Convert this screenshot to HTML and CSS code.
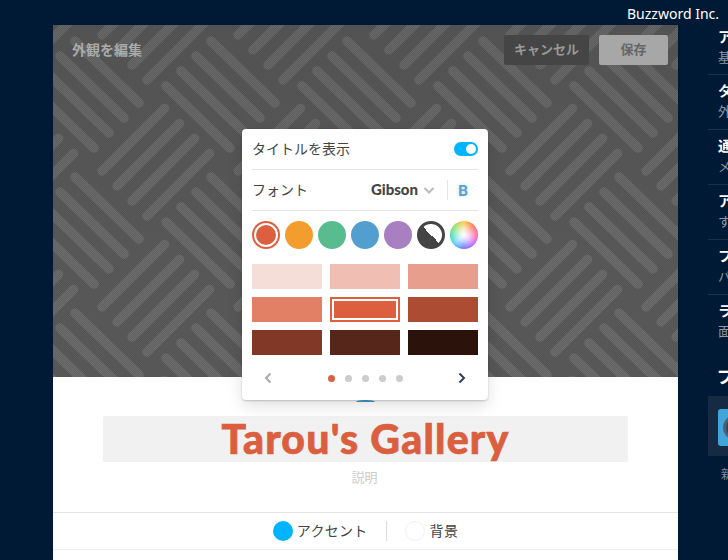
FILE: index.html
```html
<!DOCTYPE html>
<html lang="ja">
<head>
<meta charset="utf-8">
<title>外観を編集</title>
<link rel="stylesheet" href="styles.css">
</head>
<body>
<div class="app">
  <main class="editor">
    <section class="hero">
      <svg class="hero-art" width="625" height="352" viewBox="53 25 625 352" aria-hidden="true">
        <defs>
          <g id="fall" class="bars">
            <path d="M75 41l64 62M60 56l64 62M45 71l64 62M30 86l64 62"/>
          </g>
          <g id="rise" class="bars">
            <path d="M147 80l62.500-62.500M132 65l62.500-62.500M117 50l62.500-62.500M102 35l62.500-62.500"/>
          </g>
          <pattern id="weave" width="136" height="136" patternUnits="userSpaceOnUse">
            <use href="#fall"/>
            <use href="#fall" x="-136"/>
            <use href="#fall" y="-136"/>
            <use href="#fall" x="-136" y="-136"/>
            <use href="#rise"/>
            <use href="#rise" y="136"/>
            <use href="#rise" x="-136"/>
            <use href="#rise" x="-136" y="136"/>
          </pattern>
        </defs>
        <rect class="hero-base" x="53" y="25" width="625" height="352"/>
        <rect x="53" y="25" width="625" height="352" fill="url(#weave)"/>
      </svg>
      <div class="hero-bar">
        <h1 class="hero-title">外観を編集</h1>
        <div class="hero-actions">
          <button class="btn btn-cancel">キャンセル</button>
          <button class="btn btn-save">保存</button>
        </div>
      </div>
    </section>

    <section class="gallery-head">
      <div class="avatar"></div>
      <h2 class="gallery-title">Tarou's Gallery</h2>
      <p class="gallery-desc">説明</p>
    </section>

    <div class="tabs">
      <span class="tab"><i class="dot dot-accent"></i><span class="tab-label">アクセント</span></span>
      <span class="tab-rule"></span>
      <span class="tab tab-bg"><i class="dot dot-bg"></i><span class="tab-label">背景</span></span>
    </div>

    <div class="popover">
      <div class="pop-row pop-row-first">
        <span class="pop-label">タイトルを表示</span>
        <span class="toggle"><i class="knob"></i></span>
      </div>
      <div class="pop-row">
        <span class="pop-label">フォント</span>
        <span class="font-pick">
          <b class="font-name">Gibson</b>
          <svg class="chev-down" width="12" height="7" viewBox="0 0 12 7"><path d="M1.500 1l4.500 4.500L10.500 1"/></svg>
          <span class="font-rule"></span>
          <b class="font-bold">B</b>
        </span>
      </div>
      <div class="swatches">
        <span class="swatch swatch-on"><i></i></span>
        <span class="swatch s-orange"></span>
        <span class="swatch s-green"></span>
        <span class="swatch s-blue"></span>
        <span class="swatch s-purple"></span>
        <span class="swatch s-contrast"></span>
        <span class="swatch s-wheel"></span>
      </div>
      <div class="shades">
        <span class="shade c1"></span>
        <span class="shade c2"></span>
        <span class="shade c3"></span>
        <span class="shade c4"></span>
        <span class="shade c5 shade-on"></span>
        <span class="shade c6"></span>
        <span class="shade c7"></span>
        <span class="shade c8"></span>
        <span class="shade c9"></span>
      </div>
      <div class="pager">
        <svg class="pg pg-prev" width="8" height="12" viewBox="0 0 8 12"><path d="M6.500 1.500L2 6l4.500 4.500"/></svg>
        <span class="pager-dots"><i class="on"></i><i></i><i></i><i></i><i></i></span>
        <svg class="pg pg-next" width="8" height="12" viewBox="0 0 8 12"><path d="M1.500 1.500L6 6l-4.500 4.500"/></svg>
      </div>
    </div>
  </main>

  <aside class="side">
    <div class="brand">Buzzword Inc.</div>
    <ul class="side-list">
      <li><b>アカウント</b><span>基本設定</span></li>
      <li><b>タイトル</b><span>外観</span></li>
      <li><b>通知</b><span>メール</span></li>
      <li><b>アクセス</b><span>すべて</span></li>
      <li><b>フォロー</b><span>バッジ</span></li>
      <li><b>ライセンス</b><span>面</span></li>
    </ul>
    <h3 class="side-head">プラン</h3>
    <div class="plan"><span class="plan-icon"><i></i></span></div>
    <p class="side-note">新規</p>
  </aside>
</div>
</body>
</html>
```

FILE: styles.css
```css
* { box-sizing: border-box; }

html, body {
  margin: 0;
  height: 560px;
  overflow: hidden;
  background: #001a35;
}

body {
  font-family: "Noto Sans CJK JP", "Noto Sans", sans-serif;
  color: #444;
}

.app {
  display: flex;
  width: 728px;
  height: 560px;
  padding-left: 53px;
  overflow: hidden;
}

/* Editor column */
.editor {
  position: relative;
  flex: 0 0 625px;
  margin-top: 25px;
  height: 535px;
  background: #fff;
}

.hero {
  position: relative;
  height: 352px;
  overflow: hidden;
}

/* Fine checker screen laid over the woven backdrop, a little darker at the top */
.hero::before {
  content: "";
  position: absolute;
  inset: 0;
  background:
    linear-gradient(rgba(0, 0, 0, .05), rgba(0, 0, 0, 0) 70%),
    repeating-conic-gradient(rgba(0, 0, 0, .07) 0 25%, rgba(0, 0, 0, 0) 0 50%) 0 0 / 2px 2px;
}

.hero-art { display: block; }
.hero-base { fill: #595a59; }
.bars { fill: none; stroke: #6a6b6a; stroke-width: 9.500; stroke-linecap: round; }

.hero-bar {
  position: absolute;
  inset: 10px 10px auto 19px;
  display: flex;
  justify-content: space-between;
  align-items: center;
}

.hero-title {
  margin: -3px 0 0;
  font-size: 14px;
  font-weight: 700;
  color: #a9aaa9;
}

.hero-actions { display: flex; gap: 10px; }

.btn {
  height: 30px;
  border: 0;
  border-radius: 2px;
  padding: 0 0 3px;
  font: 700 13px "Noto Sans CJK JP", sans-serif;
}

.btn-cancel { width: 85px; background: #444544; color: #999; }
.btn-save { width: 69px; background: #a6a7a6; color: #666; }

/* Title block under the hero */
.gallery-head {
  position: relative;
  padding: 39px 50px 0;
  height: 135px;
  text-align: center;
}

/* Top sliver of the profile picture, the rest sits behind the panel */
.avatar {
  position: absolute;
  left: 303px;
  top: 23px;
  width: 19px;
  height: 2px;
  border-radius: 50% 50% 0 0 / 100% 100% 0 0;
  background: #3f9bd0;
}

.gallery-title {
  margin: 0;
  height: 46px;
  border-radius: 2px;
  background: #f1f1f1;
  font: 900 41px/46px "Lato", sans-serif;
  letter-spacing: 1.200px;
  -webkit-text-stroke: .7px #db5f3f;
  color: #db5f3f;
}

.gallery-desc {
  margin: 5px 0 0;
  font-size: 13px;
  line-height: 19px;
  color: #ccc;
  transform: translateX(-1px);
}

.tabs {
  display: flex;
  align-items: center;
  justify-content: center;
  height: 38px;
  border-top: 1px solid #e4e4e4;
  border-bottom: 1px solid #efefef;
  font-size: 14px;
}

.tab { display: flex; align-items: center; gap: 4px; }
.tab-bg { gap: 5px; }
.tab-label { letter-spacing: .3px; margin-top: -2px; }
.tab-rule { width: 1px; height: 20px; margin: 0 18px; background: #ddd; }

.dot { width: 20px; height: 20px; border-radius: 50%; }
.dot-accent { background: #00b4ff; }
.dot-bg { background: #fff; border: 1px solid #f0f0f0; }

/* Colour popover */
.popover {
  position: absolute;
  left: 189px;
  top: 104px;
  width: 246px;
  height: 271px;
  padding: 0 10px;
  border-radius: 4px;
  background: #fff;
  box-shadow: 0 1px 2px rgba(0, 0, 0, .2), 0 6px 16px rgba(0, 0, 0, .12);
  font-size: 14px;
}

.pop-row {
  display: flex;
  align-items: center;
  justify-content: space-between;
  height: 41px;
  border-bottom: 1px solid #e4e4e4;
}

.pop-label { margin-top: -2px; }

.toggle {
  display: block;
  position: relative;
  width: 24px;
  height: 14px;
  border-radius: 7px;
  background: #00b4ff;
}

.knob {
  position: absolute;
  right: 2px;
  top: 2px;
  width: 10px;
  height: 10px;
  border-radius: 50%;
  background: #fff;
}

.font-pick { display: flex; align-items: center; }
.font-name { font: 900 15px "Lato", sans-serif; color: #444; margin-top: -2px; }
.chev-down { margin-left: 5px; fill: none; stroke: #bbb; stroke-width: 2; }
.font-rule { width: 1px; height: 20px; margin: 0 10px 0 12px; background: #e4e4e4; }

.font-bold {
  width: 11px;
  margin-right: 9px;
  font: 900 15px "Lato", sans-serif;
  color: #5aa0d0;
  text-shadow: 0 0 5px #bfe0f5;
}

.swatches { display: flex; gap: 5px; margin-top: 10px; }

.swatch { width: 28px; height: 28px; border-radius: 50%; flex: none; }

.swatch-on {
  display: flex;
  align-items: center;
  justify-content: center;
  border: 2px solid #dc6040;
}

.swatch-on i { width: 20px; height: 20px; border-radius: 50%; background: #dc6040; }

.s-orange { background: #f49d2f; }
.s-green { background: #58bc8e; }
.s-blue { background: #529fcf; }
.s-purple { background: #a87fc0; }
.s-contrast {
  border: 3px solid #444;
  background: linear-gradient(45deg, #444 50%, #fff 50%);
}
.s-wheel {
  background:
    radial-gradient(circle, #fff 0, rgba(255, 255, 255, .75) 25%, rgba(255, 255, 255, 0) 75%),
    conic-gradient(#ffc23c, #ff6a4c, #ff5ca8, #c05cff, #5a6cff, #52c8ff, #3fd9a8, #8fdc52, #ffc23c);
}

.shades {
  display: grid;
  grid-template-columns: repeat(3, 70px);
  grid-auto-rows: 25px;
  gap: 8px;
  margin-top: 15px;
}

.shade { display: block; }
.c1 { background: #f6ded8; }
.c2 { background: #f0beb3; }
.c3 { background: #e89e8c; }
.c4 { background: #e18064; }
.c5 { background: #dc6040; }
.c6 { background: #ac4c33; }
.c7 { background: #823827; }
.c8 { background: #56261a; }
.c9 { background: #2b120b; }

.shade-on { box-shadow: inset 0 0 0 2px #dc6040, inset 0 0 0 4px #fff; }

.pager {
  display: flex;
  align-items: center;
  justify-content: space-between;
  padding: 0 12px;
  margin-top: 17px;
  height: 12px;
}

.pg { fill: none; stroke-width: 2; }
.pg-prev { stroke: #aaa; }
.pg-next { stroke: #2e3f55; }

.pager-dots { display: flex; gap: 10px; }
.pager-dots i { width: 7px; height: 7px; border-radius: 50%; background: #ccc; }
.pager-dots .on { background: #dc6040; }

/* Right rail, cut off by the window edge */
.side {
  flex: none;
  width: 200px;
  margin-left: 30px;
  color: #fff;
}

.brand {
  position: absolute;
  left: 627px;
  top: 4px;
  font: 14px/20px "Noto Sans", sans-serif;
  white-space: nowrap;
  color: #fff;
}

.side-list {
  list-style: none;
  margin: 0;
  padding: 25px 0 0;
}

.side-list li {
  display: flex;
  flex-direction: column;
  height: 55px;
  padding: 4px 0 0 10px;
  border-bottom: 1px solid #1a3049;
}

.side-list li:first-child { height: 50px; padding-top: 0; }
.side-list li:last-child { border-bottom: 0; }

.side-list b { font-size: 14px; line-height: 22px; white-space: nowrap; }
.side-list span { font-size: 13px; line-height: 20px; color: #8c99a8; white-space: nowrap; }

.side-head {
  margin: 14px 0 0 9px;
  font-size: 17px;
  line-height: 24px;
  font-weight: 700;
}

.plan {
  height: 60px;
  margin-top: 8px;
  padding: 13px 0 0 10px;
  background: #162a44;
}

.plan-icon {
  display: block;
  position: relative;
  width: 60px;
  height: 37px;
  border-radius: 3px;
  background: #42a5d9;
}

.plan-icon i {
  position: absolute;
  left: 5px;
  top: 6px;
  width: 25px;
  height: 25px;
  border-radius: 50%;
  border: 3px solid #4d6072;
  background: #33475c;
}

.side-note {
  margin: 9px 0 0 13px;
  font-size: 12px;
  line-height: 18px;
  color: #7d8896;
  white-space: nowrap;
}
```
